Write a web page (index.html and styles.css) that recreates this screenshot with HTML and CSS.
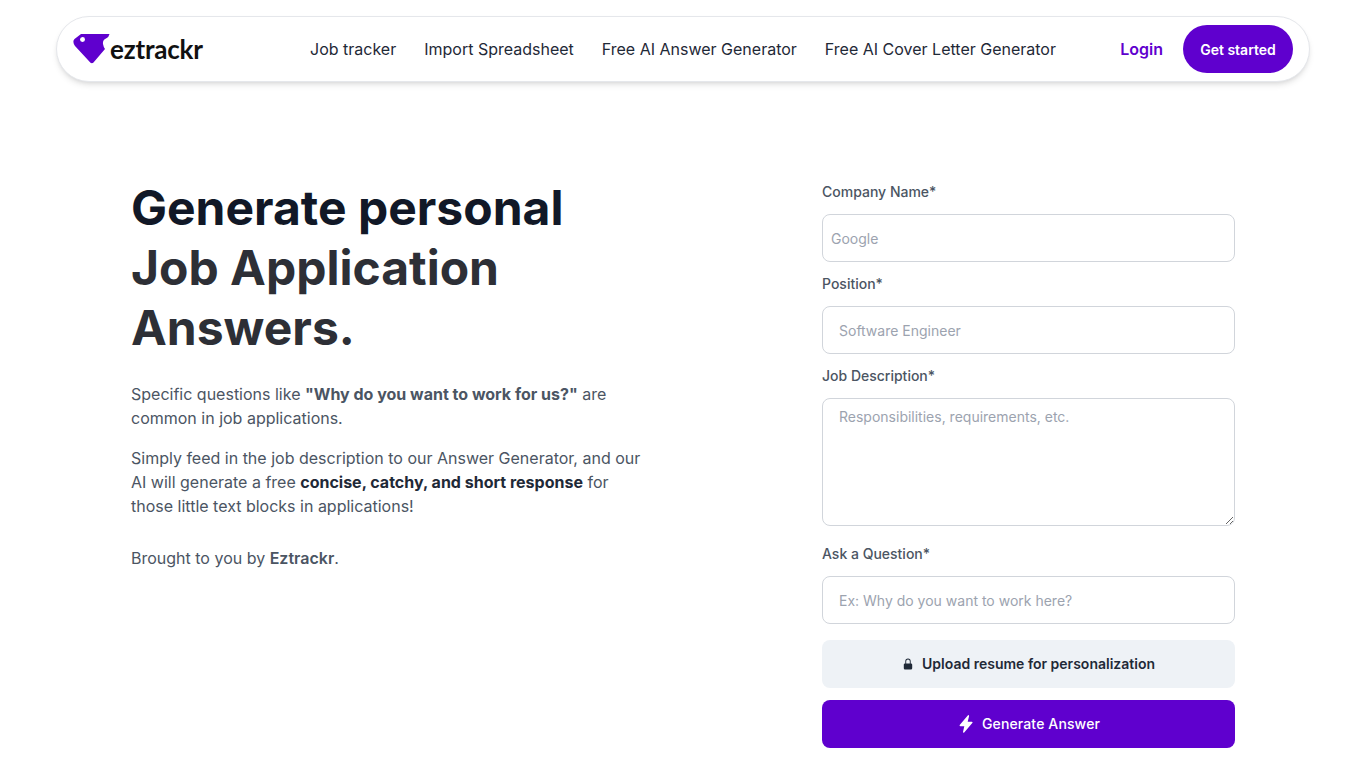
FILE: index.html
```html
<!DOCTYPE html>
<html lang="en">
<head>
<meta charset="utf-8">
<title>Eztrackr</title>
<link rel="stylesheet" href="styles.css">
</head>
<body>
<header class="nav">
  <a class="brand" href="#">
    <svg class="brand-mark" viewBox="0 0 37 31" width="37" height="31"><path fill="#5f00ce" fill-rule="evenodd" d="M8 1 L36.500 1 Q36 4 33 5.500 Q29.500 7 30 11 Q30.500 14 32 16 L20.500 29.500 Q19 30.800 17.500 29.800 L2 13 Q-1 8.500 1.500 6 Z M9.500 4 A2.500 2.500 0 1 0 9.510 9 A2.500 2.500 0 1 0 9.500 4 Z"/></svg>
    <span class="brand-name">eztrackr</span>
  </a>
  <nav class="links">
    <a href="#">Job tracker</a>
    <a href="#">Import Spreadsheet</a>
    <a href="#">Free AI Answer Generator</a>
    <a href="#">Free AI Cover Letter Generator</a>
  </nav>
  <div class="actions">
    <a class="login" href="#">Login</a>
    <a class="start" href="#">Get started</a>
  </div>
</header>
<main class="page">
  <section class="intro">
    <h1>Generate personal<br><span class="soft">Job Application<br>Answers.</span></h1>
    <p>Specific questions like <b class="heavy">"Why do you want to work for us?"</b> are common in job applications.</p>
    <p>Simply feed in the job description to our Answer Generator, and our AI will generate a free <b class="heavy dark">concise, catchy, and short response</b> for those little text blocks in applications!</p>
    <p class="credit">Brought to you by <b>Eztrackr</b>.</p>
  </section>
  <form class="form">
    <label class="label">Company Name*</label>
    <input class="field first" placeholder="Google">
    <label class="label">Position*</label>
    <input class="field" placeholder="Software Engineer">
    <label class="label">Job Description*</label>
    <textarea class="field area" placeholder="Responsibilities, requirements, etc."></textarea>
    <label class="label ask">Ask a Question*</label>
    <input class="field" placeholder="Ex: Why do you want to work here?">
    <button type="button" class="btn upload">
      <svg viewBox="0 0 20 20" width="12" height="12"><path fill="#1f2937" fill-rule="evenodd" d="M10 1a4.500 4.500 0 0 0-4.500 4.500V9H5a2 2 0 0 0-2 2v6a2 2 0 0 0 2 2h10a2 2 0 0 0 2-2v-6a2 2 0 0 0-2-2h-.5V5.500A4.500 4.500 0 0 0 10 1zm3 8V5.500a3 3 0 1 0-6 0V9h6z"/></svg>
      Upload resume for personalization
    </button>
    <button type="button" class="btn generate">
      <svg viewBox="0 0 14 18" width="14" height="18"><path fill="#fff" d="M9 .3 L.7 10 Q.3 11.200 1.500 11.200 H5.300 L4 17 Q4.200 18.200 5.200 17.500 L13.500 7.800 Q13.800 6.700 12.700 6.700 H8.700 L10.100 1 Q9.800 -.3 9 .3 Z"/></svg>
      Generate Answer
    </button>
  </form>
</main>
</body>
</html>
```
FILE: styles.css
```css
* { box-sizing: border-box; }
html, body { margin: 0; padding: 0; }
body { font-family: Inter, "Liberation Sans", sans-serif; background: #fff; color: #4b5563; height: 768px; overflow: hidden; }
a { text-decoration: none; color: inherit; }
.nav { height: 66px; margin: 16px 56px 0; padding: 0 16px; border: 1px solid #e5e7eb; border-radius: 33px; background: #fff; box-shadow: 0 4px 6px -1px rgba(0,0,0,.1), 0 2px 4px -2px rgba(0,0,0,.1); display: flex; align-items: center; }
.brand { display: flex; align-items: center; width: 237px; flex: none; }
.brand-mark { flex: none; margin-top: -1px; }
.brand-name { font-family: Lato, sans-serif; font-weight: 700; font-size: 26px; color: #111; letter-spacing: -.2px; }
.links { display: flex; gap: 28px; font-size: 16px; color: #1f2937; }
.actions { margin-left: auto; display: flex; align-items: center; gap: 20px; }
.login { font-weight: 600; font-size: 16px; color: #5f00ce; }
.start { background: #5f00ce; color: #fff; height: 48px; width: 110px; border-radius: 24px; display: flex; align-items: center; justify-content: center; font-weight: 600; font-size: 14px; }
.page { display: flex; padding: 0 131px; }
.intro { width: 510px; padding-top: 96px; }
h1 { margin: 0 0 24px; font-size: 48px; line-height: 60px; font-weight: 700; color: #111827; }
.soft { color: #2d2f36; }
.intro p { margin: 0 0 16px; font-size: 16px; line-height: 24px; }
.intro b { font-weight: 600; }
.intro b.heavy { font-weight: 700; }
.intro b.dark { color: #1f2937; }
.intro .credit { margin-top: 28px; }
.form { margin-left: 181px; width: 413px; display: flex; flex-direction: column; padding-top: 100px; }
.label { font-size: 14px; line-height: 20px; font-weight: 500; color: #4b5563; margin-bottom: 12px; }
.field { width: 100%; height: 48px; border: 1px solid #d1d5db; border-radius: 8px; padding: 0 16px; font: 14px/20px Inter, sans-serif; color: #374151; background: #fff; margin-bottom: 12px; display: block; outline: none; }
.field.first { padding: 0 8px; }
.field::placeholder { color: #9ca3af; opacity: 1; }
.area { height: 128px; padding: 8px 16px; margin-bottom: 18px; resize: vertical; }
.btn { width: 100%; height: 48px; border: 0; border-radius: 8px; display: flex; align-items: center; justify-content: center; font: 600 14px/20px Inter, sans-serif; }
.upload { background: #eef2f6; color: #1f2937; gap: 8px; margin-top: 4px; }
.generate { background: #5f00ce; color: #fff; font-weight: 500; letter-spacing: .13px; gap: 9px; margin-top: 12px; padding-left: 8px; }
```
